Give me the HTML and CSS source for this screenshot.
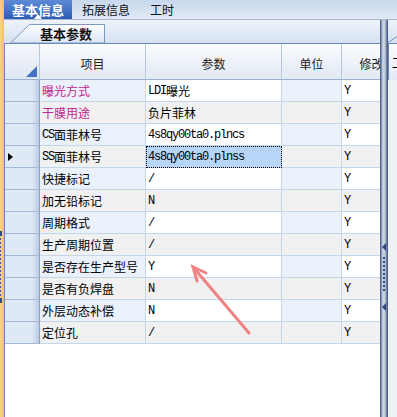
FILE: index.html
```html
<!DOCTYPE html>
<html>
<head>
  <meta charset="UTF-8"/>
  <title>基本参数</title>
  <link rel="stylesheet" href="styles.css">
</head>
<body>
  <div class="app">
    <div class="edge">
      <span class="edge-mark"></span>
      <span class="edge-dots"></span>
      <span class="edge-mark"></span>
    </div>

    <div class="main">
      <div class="menubar">
        <div class="menu-item active">基本信息</div>
        <div class="menu-item">拓展信息</div>
        <div class="menu-item">工时</div>
      </div>

      <div class="workspace">
        <div class="content">
          <div class="tabstrip">
            <div class="tab">
              <svg class="tab-shape" viewBox="0 0 95 19" preserveAspectRatio="none">
                <defs>
                  <linearGradient id="tabfill" x1="0" y1="0" x2="0" y2="1">
                    <stop offset="0" stop-color="#ffffff"/>
                    <stop offset="1" stop-color="#d9e5f4"/>
                  </linearGradient>
                </defs>
                <polygon points="0.5,19 19.5,0.5 94.5,0.5 94.5,19" fill="url(#tabfill)" stroke="#7c97c0" stroke-width="1"/>
              </svg>
              <span class="tab-label">基本参数</span>
            </div>
          </div>

          <div class="grid">
            <div class="row head">
              <div class="cell rowhead corner"><span class="corner-tri"></span></div>
              <div class="cell">项目</div>
              <div class="cell">参数</div>
              <div class="cell">单位</div>
              <div class="cell">修改</div>
            </div>

            <div class="row odd">
              <div class="cell rowhead"></div>
              <div class="cell item hot">曝光方式</div>
              <div class="cell val"><span class="mono">LDI</span>曝光</div>
              <div class="cell unit"></div>
              <div class="cell val"><span class="mono">Y</span></div>
            </div>
            <div class="row even">
              <div class="cell rowhead"></div>
              <div class="cell item hot">干膜用途</div>
              <div class="cell val">负片菲林</div>
              <div class="cell unit"></div>
              <div class="cell val"><span class="mono">Y</span></div>
            </div>
            <div class="row odd">
              <div class="cell rowhead"></div>
              <div class="cell item"><span class="mono">CS</span>面菲林号</div>
              <div class="cell val"><span class="mono">4s8qy00ta0.plncs</span></div>
              <div class="cell unit"></div>
              <div class="cell val"><span class="mono">Y</span></div>
            </div>
            <div class="row even">
              <div class="cell rowhead current"><span class="pointer"></span></div>
              <div class="cell item"><span class="mono">SS</span>面菲林号</div>
              <div class="cell val selected"><span class="mono">4s8qy00ta0.plnss</span></div>
              <div class="cell unit"></div>
              <div class="cell val"><span class="mono">Y</span></div>
            </div>
            <div class="row odd">
              <div class="cell rowhead"></div>
              <div class="cell item">快捷标记</div>
              <div class="cell val"><span class="mono">/</span></div>
              <div class="cell unit"></div>
              <div class="cell val"><span class="mono">Y</span></div>
            </div>
            <div class="row even">
              <div class="cell rowhead"></div>
              <div class="cell item">加无铅标记</div>
              <div class="cell val"><span class="mono">N</span></div>
              <div class="cell unit"></div>
              <div class="cell val"><span class="mono">Y</span></div>
            </div>
            <div class="row odd">
              <div class="cell rowhead"></div>
              <div class="cell item">周期格式</div>
              <div class="cell val"><span class="mono">/</span></div>
              <div class="cell unit"></div>
              <div class="cell val"><span class="mono">Y</span></div>
            </div>
            <div class="row even">
              <div class="cell rowhead"></div>
              <div class="cell item">生产周期位置</div>
              <div class="cell val"><span class="mono">/</span></div>
              <div class="cell unit"></div>
              <div class="cell val"><span class="mono">Y</span></div>
            </div>
            <div class="row odd">
              <div class="cell rowhead"></div>
              <div class="cell item">是否存在生产型号</div>
              <div class="cell val"><span class="mono">Y</span></div>
              <div class="cell unit"></div>
              <div class="cell val"><span class="mono">Y</span></div>
            </div>
            <div class="row even">
              <div class="cell rowhead"></div>
              <div class="cell item">是否有负焊盘</div>
              <div class="cell val"><span class="mono">N</span></div>
              <div class="cell unit"></div>
              <div class="cell val"><span class="mono">Y</span></div>
            </div>
            <div class="row odd">
              <div class="cell rowhead"></div>
              <div class="cell item">外层动态补偿</div>
              <div class="cell val"><span class="mono">N</span></div>
              <div class="cell unit"></div>
              <div class="cell val"><span class="mono">Y</span></div>
            </div>
            <div class="row even">
              <div class="cell rowhead"></div>
              <div class="cell item">定位孔</div>
              <div class="cell val"><span class="mono">/</span></div>
              <div class="cell unit"></div>
              <div class="cell val"><span class="mono">Y</span></div>
            </div>
          </div>
        </div>

        <div class="splitter">
          <span class="grip-arrow"></span>
          <span class="grip-dots"></span>
          <span class="grip-arrow"></span>
        </div>

        <div class="side">
          <div class="side-top">
            <svg class="side-tab" viewBox="0 0 9 23" preserveAspectRatio="none">
              <polyline points="0,22.5 9,16.5" fill="none" stroke="#7c97c0" stroke-width="1"/>
            </svg>
          </div>
          <div class="side-head">工序</div>
        </div>
      </div>
    </div>

    <!-- red annotation arrow drawn on top of the screenshot -->
    <svg class="annot" viewBox="0 0 397 417">
      <g stroke="#ef8383" stroke-width="3" stroke-linecap="round" fill="none">
        <line x1="249" y1="333" x2="193" y2="267"/>
        <polyline points="197,281 193,267 206,273"/>
      </g>
    </svg>
  </div>
</body>
</html>
```

FILE: styles.css
```css
body {
  margin: 0;
  font-family: "Noto Sans CJK SC", "Liberation Sans", sans-serif;
  font-size: 12px;
  color: #000;
  background: #fff;
}
.app {
  position: relative;
  display: flex;
  width: 397px;
  height: 417px;
  overflow: hidden;
}

/* left docking edge */
.edge {
  width: 4px;
  flex: none;
  display: flex;
  flex-direction: column;
  padding-top: 231px;
  box-sizing: border-box;
  background: linear-gradient(to right, #f8d488, #f2c062);
}
.edge-mark {
  width: 2px;
  height: 5px;
  background: #2d4c88;
}
.edge-dots {
  width: 1px;
  height: 58px;
  margin: 2px 0;
  background: repeating-linear-gradient(#3c5890 0 2px, transparent 2px 4px);
}

.main {
  flex: 1;
  display: flex;
  flex-direction: column;
  min-width: 0;
}

/* top menu */
.menubar {
  height: 19px;
  flex: none;
  display: flex;
  border-bottom: 1px solid #a7b7cf;
  background: linear-gradient(#c8d8ed, #e1e9f4);
}
.menu-item {
  display: flex;
  align-items: center;
  padding: 0 10px;
  font-size: 12px;
  color: #111;
}
.menu-item.active {
  position: relative;
  padding: 0 8px;
  font-size: 13px;
  font-weight: bold;
  color: #fff;
  background: linear-gradient(#5b8bd7, #2d5db4);
}
.menu-item.active::after {
  content: "";
  position: absolute;
  left: 50%;
  bottom: 0;
  margin-left: -4px;
  border-left: 4px solid transparent;
  border-right: 4px solid transparent;
  border-bottom: 5px solid #fff;
}

.workspace {
  flex: 1;
  display: flex;
  min-height: 0;
}
.content {
  width: 376px;
  flex: none;
  display: flex;
  flex-direction: column;
}

/* tab strip */
.tabstrip {
  height: 23px;
  flex: none;
  display: flex;
  align-items: flex-end;
  padding-left: 6px;
  border-bottom: 1px solid #6b89b8;
  background: linear-gradient(#eef3fa, #d5e1f2);
}
.tab {
  position: relative;
  width: 95px;
  height: 19px;
  display: flex;
  align-items: center;
}
.tab-shape {
  position: absolute;
  left: 0;
  top: 0;
  width: 95px;
  height: 19px;
}
.tab-label {
  position: relative;
  padding-left: 30px;
  font-size: 13px;
  font-weight: bold;
  color: #111;
}

/* property grid */
.grid {
  flex: 1;
  overflow: hidden;
  border-left: 1px solid #6f88b2;
  background: #fff;
}
.row {
  display: grid;
  grid-template-columns: 35px 106px 136px 60px 60px;
  height: 22px;
}
.row.head {
  height: 36px;
}
.cell {
  display: flex;
  align-items: center;
  padding-left: 2px;
  box-sizing: border-box;
  white-space: nowrap;
  overflow: hidden;
  border-right: 1px solid #c5d5ea;
  border-bottom: 1px solid #c5d5ea;
}
.head .cell {
  justify-content: center;
  padding: 3px 0 0;
  color: #222;
  border-right-color: #b7c7de;
  border-bottom-color: #9cb0cf;
  background: linear-gradient(#fafcfe, #e2e9f4);
}
.rowhead {
  padding-left: 0;
  border-right-color: #8aa3c9;
  border-bottom-color: #a4b9d8;
  background: linear-gradient(to right, #dfe8f5 80%, #bacbe5);
}
.head .corner {
  justify-content: flex-end;
  align-items: flex-end;
  padding: 0 2px 2px 0;
  background: linear-gradient(#f4f7fb, #dfe7f3);
}
.corner-tri {
  width: 0;
  height: 0;
  border-left: 11px solid transparent;
  border-bottom: 11px solid #4473c4;
}
.pointer {
  margin-left: 3px;
  border-left: 5px solid #000;
  border-top: 4px solid transparent;
  border-bottom: 4px solid transparent;
}

.odd .item,
.odd .unit {
  background: #eaf1fb;
}
.odd .val {
  background: #fff;
}
.even .item,
.even .unit,
.even .val {
  background: #f1f1f1;
}
.item.hot {
  color: #c2268f;
}
.val.selected {
  background: #b7d5f6;
  outline: 1px dotted #000;
  outline-offset: -1px;
}
.mono {
  font-family: "Liberation Mono", monospace;
  font-size: 12px;
  letter-spacing: -1.2px;
}

/* splitter and right panel */
.splitter {
  width: 8px;
  flex: none;
  display: flex;
  flex-direction: column;
  align-items: center;
  padding-top: 223px;
  box-sizing: border-box;
  background: linear-gradient(to right, #556a91 0, #556a91 1px, #b3bfd1 2px, #d3dae6 4px, #9aa8bf 6px, #4c5f88 7px);
}
.grip-arrow {
  width: 0;
  height: 0;
  border-right: 4px solid #2f4677;
  border-top: 4px solid transparent;
  border-bottom: 4px solid transparent;
}
.grip-dots {
  width: 2px;
  height: 34px;
  margin: 6px 0 12px;
  background: repeating-linear-gradient(#2f4a82 0 2px, transparent 2px 4px);
}
.side {
  flex: 1;
  display: flex;
  flex-direction: column;
  background: #eef1f6;
  overflow: hidden;
}
.side-top {
  height: 23px;
  flex: none;
  border-bottom: 1px solid #6b89b8;
  background: linear-gradient(#eef3fa, #d5e1f2);
}
.side-tab {
  display: block;
  width: 9px;
  height: 23px;
}
.side-head {
  height: 36px;
  display: flex;
  align-items: center;
  padding-left: 3px;
  white-space: nowrap;
  border-left: 1px solid #7088b2;
  background: linear-gradient(#fafcfe, #e2e9f4);
}

.annot {
  position: absolute;
  left: 0;
  top: 0;
  width: 397px;
  height: 417px;
  pointer-events: none;
}
```
